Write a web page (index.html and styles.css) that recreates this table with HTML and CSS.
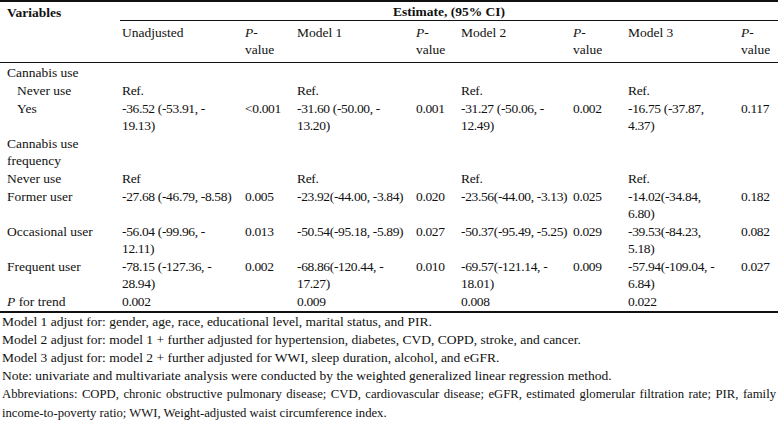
FILE: index.html
```
<!DOCTYPE html>
<html>
<head>
<meta charset="utf-8">
<link rel="stylesheet" href="styles.css">
</head>
<body>
<table class="tbl">
  <colgroup>
    <col class="c0"><col class="c1"><col class="c2"><col class="c3"><col class="c4"><col class="c5"><col class="c6"><col class="c7"><col class="c8">
  </colgroup>
  <thead>
    <tr class="h1">
      <th rowspan="2" class="var">Variables</th>
      <th colspan="8" class="est">Estimate, (95% CI)</th>
    </tr>
    <tr class="h2">
      <td>Unadjusted</td><td><i>P</i>-<br>value</td>
      <td>Model 1</td><td><i>P</i>-<br>value</td>
      <td>Model 2</td><td><i>P</i>-<br>value</td>
      <td>Model 3</td><td><i>P</i>-<br>value</td>
    </tr>
  </thead>
  <tbody>
    <tr><td class="lab">Cannabis use</td><td></td><td></td><td></td><td></td><td></td><td></td><td></td><td></td></tr>
    <tr><td class="lab ind">Never use</td><td>Ref.</td><td></td><td>Ref.</td><td></td><td>Ref.</td><td></td><td>Ref.</td><td></td></tr>
    <tr><td class="lab ind">Yes</td><td>-36.52 (-53.91, -<br>19.13)</td><td>&lt;0.001</td><td>-31.60 (-50.00, -<br>13.20)</td><td>0.001</td><td>-31.27 (-50.06, -<br>12.49)</td><td>0.002</td><td>-16.75 (-37.87,<br>4.37)</td><td>0.117</td></tr>
    <tr><td class="lab">Cannabis use<br>frequency</td><td></td><td></td><td></td><td></td><td></td><td></td><td></td><td></td></tr>
    <tr><td class="lab">Never use</td><td>Ref</td><td></td><td>Ref.</td><td></td><td>Ref.</td><td></td><td>Ref.</td><td></td></tr>
    <tr><td class="lab">Former user</td><td>-27.68 (-46.79, -8.58)</td><td>0.005</td><td>-23.92(-44.00, -3.84)</td><td>0.020</td><td>-23.56(-44.00, -3.13)</td><td>0.025</td><td>-14.02(-34.84,<br>6.80)</td><td>0.182</td></tr>
    <tr><td class="lab">Occasional user</td><td>-56.04 (-99.96, -<br>12.11)</td><td>0.013</td><td>-50.54(-95.18, -5.89)</td><td>0.027</td><td>-50.37(-95.49, -5.25)</td><td>0.029</td><td>-39.53(-84.23,<br>5.18)</td><td>0.082</td></tr>
    <tr><td class="lab">Frequent user</td><td>-78.15 (-127.36, -<br>28.94)</td><td>0.002</td><td>-68.86(-120.44, -<br>17.27)</td><td>0.010</td><td>-69.57(-121.14, -<br>18.01)</td><td>0.009</td><td>-57.94(-109.04, -<br>6.84)</td><td>0.027</td></tr>
    <tr><td class="lab"><i>P</i> for trend</td><td>0.002</td><td></td><td>0.009</td><td></td><td>0.008</td><td></td><td>0.022</td><td></td></tr>
  </tbody>
</table>
<div class="notes">
  <p>Model 1 adjust for: gender, age, race, educational level, marital status, and PIR.</p>
  <p>Model 2 adjust for: model 1 + further adjusted for hypertension, diabetes, CVD, COPD, stroke, and cancer.</p>
  <p>Model 3 adjust for: model 2 + further adjusted for WWI, sleep duration, alcohol, and eGFR.</p>
  <p>Note: univariate and multivariate analysis were conducted by the weighted generalized linear regression method.</p>
  <p class="abbr">Abbreviations: COPD, chronic obstructive pulmonary disease; CVD, cardiovascular disease; eGFR, estimated glomerular filtration rate; PIR, family income-to-poverty ratio; WWI, Weight-adjusted waist circumference index.</p>
</div>
</body>
</html>
```
FILE: styles.css
```
html, body {
  margin: 0;
  padding: 0;
  background: #fff;
  color: #111;
  font-family: "Liberation Serif", "Times New Roman", serif;
  font-size: 13.5px;
}

.tbl {
  width: 778px;
  table-layout: fixed;
  border-collapse: collapse;
  border-top: 2px solid #111;
  border-bottom: 2px solid #111;
}

.c0 { width: 120px; }
.c1 { width: 123px; }
.c2 { width: 52px; }
.c3 { width: 119px; }
.c4 { width: 45px; }
.c5 { width: 112px; }
.c6 { width: 55px; }
.c7 { width: 113px; }
.c8 { width: 39px; }

.tbl th,
.tbl td {
  padding: 0.5px 0 0.5px 2px;
  text-align: left;
  vertical-align: top;
  white-space: nowrap;
  line-height: 17px;
  font-weight: normal;
}

.tbl tbody td {
  letter-spacing: -0.35px;
}

.tbl thead {
  border-bottom: 1px solid #111;
}

.tbl th.var {
  font-weight: bold;
  padding: 2px 0 0 7px;
}

.tbl th.est {
  font-weight: bold;
  text-align: center;
  padding: 1px 0 0 0;
  height: 16px;
  border-bottom: 1px solid #111;
}

.tbl .h2 td {
  padding-top: 3px;
  padding-bottom: 4px;
}

.tbl tbody tr:first-child td {
  padding-top: 1px;
}

.tbl td.lab {
  padding-left: 7px;
  letter-spacing: 0;
}

.tbl td.ind {
  padding-left: 17px;
}

.notes {
  padding: 0 2px 0 2px;
}

.notes p {
  margin: 0;
  line-height: 18.2px;
}

.notes p.abbr {
  font-size: 12.7px;
  text-align: justify;
}
```
